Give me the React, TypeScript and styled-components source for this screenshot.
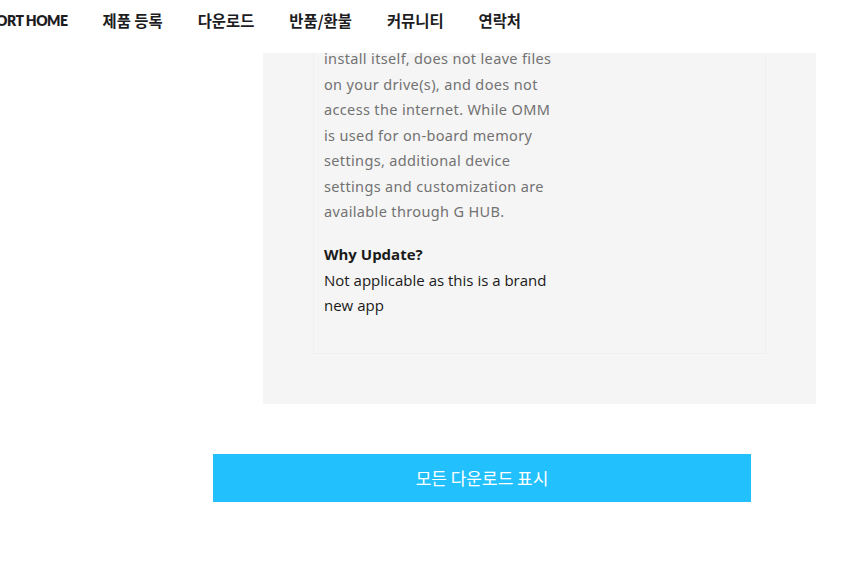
import styled, { createGlobalStyle } from "styled-components";

const GlobalStyle = createGlobalStyle`
	html, body {
		margin: 0;
		padding: 0;
		background: #ffffff;
		overflow: hidden;
	}
`;

const Header = styled.nav`
	position: fixed;
	top: 0;
	left: 0;
	right: 0;
	height: 53px;
	background: #ffffff;
	display: flex;
	align-items: center;
	gap: 35px;
	margin-left: -38px;
	padding-bottom: 13px;
	box-sizing: border-box;
	z-index: 2;
`;

const NavItem = styled.a<{ $latin?: boolean }>`
	font-family: ${(p) => (p.$latin ? "Lato, " : "")}"Noto Sans CJK KR", sans-serif;
	font-size: ${(p) => (p.$latin ? "14px" : "15.4px")};
	font-weight: ${(p) => (p.$latin ? 800 : 600)};
	color: #1d1d1f;
	text-decoration: none;
	white-space: nowrap;
	letter-spacing: ${(p) => (p.$latin ? "-0.5px" : "0")};
`;

const Page = styled.main`
	padding-top: 46px;
	display: flex;
	flex-direction: column;
`;

const Panel = styled.section`
	margin-left: 263px;
	width: 553px;
	background: #f5f5f5;
	padding: 0 50px 50px;
	box-sizing: border-box;
`;

const Card = styled.div`
	border: 1px solid #efefef;
	border-top: none;
	padding: 0 10px 35px;
`;

const Notes = styled.p`
	margin: 0;
	width: 232px;
	font-family: "Noto Sans", sans-serif;
	font-size: 14.5px;
	letter-spacing: 0.35px;
	line-height: 25.5px;
	color: #727272;
`;

const Heading = styled.h4`
	margin: 17px 0 0;
	font-family: "Open Sans", sans-serif;
	font-size: 15px;
	font-weight: 700;
	line-height: 25px;
	color: #1a1a1a;
`;

const Body = styled.p`
	margin: 1px 0 0;
	width: 236px;
	font-family: "Open Sans", sans-serif;
	font-size: 15px;
	line-height: 25px;
	color: #1a1a1a;
`;

const ShowAll = styled.button`
	margin: 50px 0 0 213px;
	width: 538px;
	height: 48px;
	border: none;
	background: #22c1fe;
	color: #ffffff;
	font-family: "Noto Sans CJK KR", sans-serif;
	font-size: 17px;
	font-weight: 400;
	cursor: pointer;
`;

const navItems = ["제품 등록", "다운로드", "반품/환불", "커뮤니티", "연락처"];

const App = () => {
	return (
		<>
			<GlobalStyle />
			<Header>
				<NavItem $latin href="#">SUPPORT HOME</NavItem>
				{navItems.map((item) => (
					<NavItem key={item} href="#">
						{item}
					</NavItem>
				))}
			</Header>
			<Page>
				<Panel>
					<Card>
						<Notes>
							install itself, does not leave files on your drive(s), and does not
							access the internet. While OMM is used for on-board memory settings,
							additional device settings and customization are available through G
							HUB.
						</Notes>
						<Heading>Why Update?</Heading>
						<Body>Not applicable as this is a brand new app</Body>
					</Card>
				</Panel>
				<ShowAll>모든 다운로드 표시</ShowAll>
			</Page>
		</>
	);
};

export default App;
